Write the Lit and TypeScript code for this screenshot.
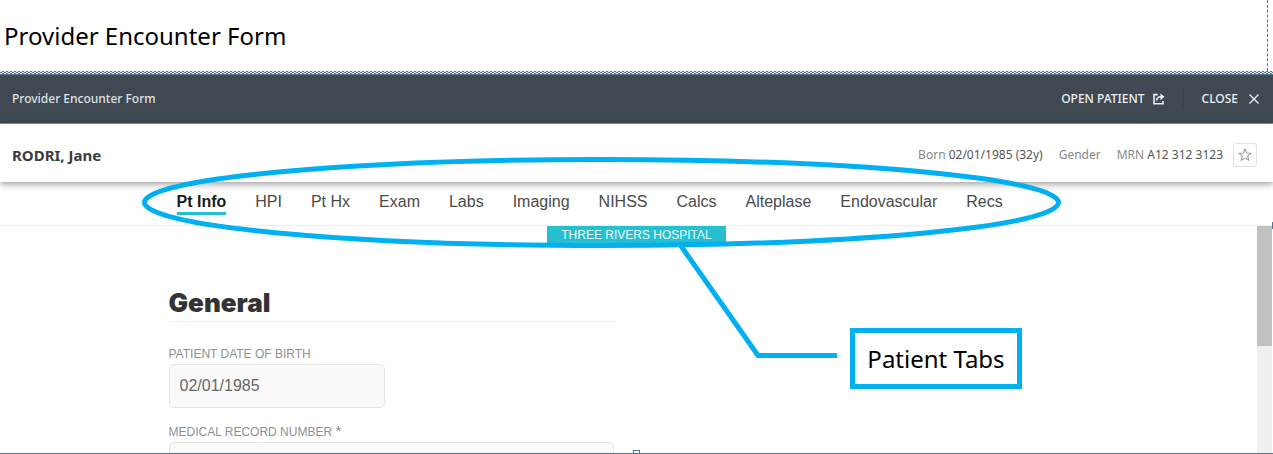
import { LitElement, html, css } from "lit";
import { customElement, property, state } from "lit/decorators.js";

const TABS = [
  "Pt Info", "HPI", "Pt Hx", "Exam", "Labs", "Imaging",
  "NIHSS", "Calcs", "Alteplase", "Endovascular", "Recs",
];

@customElement("app-bar")
class AppBar extends LitElement {
  static styles = css`
    :host {
      display: flex;
      align-items: center;
      justify-content: space-between;
      box-sizing: border-box;
      height: 50px;
      padding: 0 13px 0 12px;
      border-top: 1px solid #6b7580;
      border-bottom: 1px solid #8a929a;
      background: #404952;
      color: #dfe2e5;
      font: 500 12px/20px "Noto Sans", sans-serif;
    }
    .actions { display: flex; align-items: center; }
    .action {
      display: flex;
      align-items: center;
      gap: 8px;
      padding: 0;
      border: 0;
      background: none;
      color: #eceef0;
      font: inherit;
    }
    .close {
      margin-left: 18px;
      padding-left: 18px;
      border-left: 1px solid #39414a;
      gap: 10px;
    }
  `;
  render() {
    return html`
      <span>Provider Encounter Form</span>
      <div class="actions">
        <button class="action">
          OPEN PATIENT
          <svg width="12" height="12" viewBox="0 0 12 12" fill="none" stroke="currentColor" stroke-width="1.6">
            <path d="M4.6 1.6H1V10.8H10V8" />
            <path d="M3.6 7.6C3.8 5 5.4 3.8 8 3.8" />
            <path d="M7.4.4 11.6 3.8 7.4 7.2Z" fill="currentColor" stroke="none" />
          </svg>
        </button>
        <button class="action close">
          CLOSE
          <svg width="12" height="12" viewBox="0 0 12 12" fill="none" stroke="currentColor" stroke-width="1.3">
            <path d="M1.5 1.5 10.5 10.5M10.5 1.5 1.5 10.5" />
          </svg>
        </button>
      </div>
    `;
  }
}

@customElement("patient-banner")
class PatientBanner extends LitElement {
  static styles = css`
    :host {
      display: flex;
      align-items: center;
      justify-content: space-between;
      position: relative;
      box-sizing: border-box;
      height: 58px;
      padding: 3px 16px 0 12px;
      background: #fff;
      box-shadow: 0 2px 7px rgba(0, 0, 0, 0.4);
      color: #555;
      font: 12px/20px "Noto Sans", sans-serif;
    }
    .name { margin: 0; color: #3c3c3c; font-size: 15px; line-height: 20px; font-weight: 700; }
    .facts { display: flex; align-items: center; gap: 16px; }
    .key { color: #888; }
    .star {
      display: flex;
      align-items: center;
      justify-content: center;
      width: 24px;
      height: 24px;
      margin-left: -6px;
      padding: 0;
      border: 1px solid #e2e2e2;
      border-radius: 3px;
      background: #fff;
      color: #999;
    }
  `;
  render() {
    return html`
      <h2 class="name">RODRI, Jane</h2>
      <div class="facts">
        <span><span class="key">Born</span> 02/01/1985 (32y)</span>
        <span class="key">Gender</span>
        <span><span class="key">MRN</span> A12 312 3123</span>
        <button class="star" aria-label="Add to favourites">
          <svg width="14" height="14" viewBox="0 0 14 14" fill="none" stroke="currentColor" stroke-width="1.1" stroke-linejoin="round">
            <path d="M7 1 8.7 5 13 5.3 9.7 8.1 10.8 12.4 7 10.1 3.2 12.4 4.3 8.1 1 5.3 5.3 5Z" />
          </svg>
        </button>
      </div>
    `;
  }
}

@customElement("patient-tabs")
class PatientTabs extends LitElement {
  @state() private current = TABS[0];
  static styles = css`
    :host {
      display: block;
      border-bottom: 1px solid #eee;
      background: #fff;
      font: 16px/20px "Liberation Sans", Arial, sans-serif;
    }
    .tabs {
      display: flex;
      gap: 29px;
      max-width: 920px;
      height: 43px;
      margin: 0 auto;
      align-items: flex-start;
      padding-top: 10px;
      box-sizing: border-box;
    }
    .tab {
      padding: 0;
      border: 0;
      border-bottom: 3px solid transparent;
      background: none;
      color: #4a4a4a;
      font: inherit;
      white-space: nowrap;
    }
    .active { border-color: #26bfd0; color: #1a1a1a; font-weight: 700; }
  `;
  render() {
    return html`
      <nav class="tabs" role="tablist">
        ${TABS.map((t) => html`
          <button
            class="tab ${t === this.current ? "active" : ""}"
            role="tab"
            aria-selected=${t === this.current}
            @click=${() => (this.current = t)}
          >${t}</button>`)}
      </nav>
    `;
  }
}

@customElement("text-field")
class TextField extends LitElement {
  @property() label = "";
  @property() value = "";
  @property({ type: Boolean }) required = false;
  static styles = css`
    :host { display: block; }
    .label {
      display: block;
      color: #8c9194;
      font: 12px/16px "Liberation Sans", Arial, sans-serif;
      text-transform: uppercase;
    }
    .mark { font-size: 15px; line-height: 12px; }
    .input {
      display: block;
      box-sizing: border-box;
      width: 100%;
      height: 44px;
      margin-top: 2px;
      padding: 0 10px;
      border: 1px solid #e6e6e6;
      border-radius: 5px;
      background: #fafafa;
      color: #666;
      font: 16px/20px "Liberation Sans", Arial, sans-serif;
    }
  `;
  render() {
    return html`
      <label class="label" for="field">${this.label}${this.required ? html` <span class="mark">*</span>` : ""}</label>
      <input class="input" id="field" .value=${this.value} ?required=${this.required} />
    `;
  }
}

@customElement("app-root")
class AppRoot extends LitElement {
  static styles = css`
    :host {
      display: flex;
      flex-direction: column;
      position: relative;
      box-sizing: border-box;
      height: 100vh;
      overflow: hidden;
      border-bottom: 1px solid #4f7399;
      background: #fff;
      font-family: "Noto Sans", sans-serif;
    }
    .title {
      margin: 0 5px 0 0;
      padding: 20px 4px 19px;
      border-right: 1px dashed #4f7399;
      color: #000;
      font-size: 24px;
      line-height: 32px;
      font-weight: 400;
    }
    .rule {
      flex: none;
      height: 3px;
      background: repeating-conic-gradient(#4f7399 0 25%, #e4ebf2 0 50%) 0 0 / 4px 2px;
    }
    app-bar, patient-banner, patient-tabs { flex: none; }
    patient-banner { z-index: 1; }
    .body { display: flex; flex: 1; min-height: 0; }
    .content { flex: 1; min-width: 0; overflow: hidden; }
    .hospital {
      width: 179px;
      margin: 0 auto;
      padding-left: 16px;
      box-sizing: content-box;
      text-align: center;
    }
    .badge {
      display: block;
      padding-bottom: 2px;
      background: #26bfd0;
      color: #e6fbff;
      font: 12px/18px "Liberation Sans", Arial, sans-serif;
    }
    .form {
      display: grid;
      grid-template-columns: 1fr 1fr;
      column-gap: 30px;
      max-width: 920px;
      margin: 0 auto;
      padding-top: 40px;
    }
    .heading {
      margin: 0 0 24px;
      padding-bottom: 1px;
      border-bottom: 1px solid #eee;
      color: #333;
      font: 900 26px/34px Inter, "Liberation Sans", sans-serif;
    }
    .birth { width: 216px; margin-bottom: 16px; }
    .track { width: 15px; margin-right: 1px; background: #f0f0f0; }
    .thumb { height: 120px; background: #c1c1c1; }
    .markup { position: absolute; left: 0; top: 0; z-index: 2; pointer-events: none; }
    .callout {
      position: absolute;
      left: 850px;
      top: 328px;
      z-index: 2;
      box-sizing: border-box;
      width: 172px;
      padding: 10px 0 9px;
      border: 5px solid #00b0f0;
      background: #fff;
      color: #000;
      font-size: 24px;
      line-height: 32px;
      text-align: center;
      white-space: nowrap;
    }
    .handle {
      position: absolute;
      left: 50%;
      bottom: -4px;
      z-index: 2;
      box-sizing: border-box;
      width: 7px;
      height: 7px;
      margin-left: -4px;
      border: 1px solid #4f7399;
      background: #fff;
    }
    .side { position: absolute; right: 0; top: 222px; z-index: 2; width: 1px; height: 7px; background: #4f7399; }
  `;
  render() {
    return html`
      <h1 class="title">Provider Encounter Form</h1>
      <div class="rule"></div>
      <app-bar></app-bar>
      <patient-banner></patient-banner>
      <patient-tabs></patient-tabs>
      <div class="body">
        <main class="content">
          <div class="hospital"><span class="badge">THREE RIVERS HOSPITAL</span></div>
          <div class="form">
            <section>
              <h2 class="heading">General</h2>
              <text-field class="birth" label="Patient date of birth" value="02/01/1985"></text-field>
              <text-field label="Medical record number" required></text-field>
            </section>
          </div>
        </main>
        <div class="track"><div class="thumb"></div></div>
      </div>
      <svg class="markup" width="1273" height="454" viewBox="0 0 1273 454" fill="none" stroke="#00b0f0" stroke-width="5">
        <ellipse cx="601.5" cy="202.5" rx="457" ry="43" />
        <path d="M681 246 758 355.5H837" />
      </svg>
      <div class="callout">Patient Tabs</div>
      <span class="handle"></span>
      <span class="side"></span>
    `;
  }
}
